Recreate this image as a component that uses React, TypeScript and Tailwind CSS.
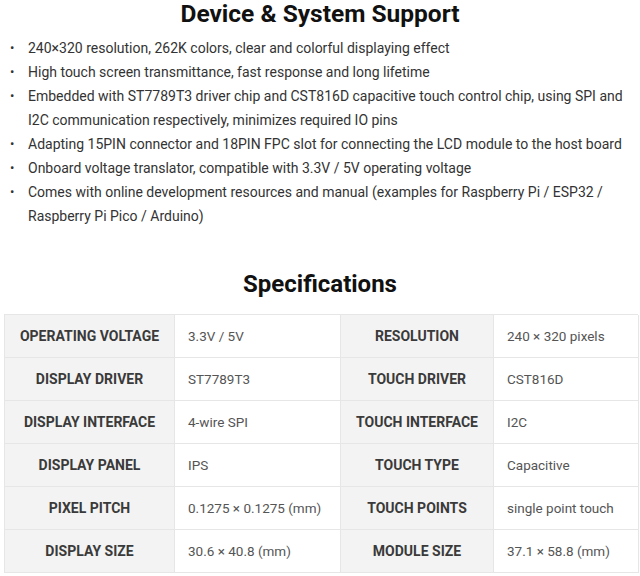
const features = [
  '240×320 resolution, 262K colors, clear and colorful displaying effect',
  'High touch screen transmittance, fast response and long lifetime',
  'Embedded with ST7789T3 driver chip and CST816D capacitive touch control chip, using SPI and I2C communication respectively, minimizes required IO pins',
  'Adapting 15PIN connector and 18PIN FPC slot for connecting the LCD module to the host board',
  'Onboard voltage translator, compatible with 3.3V / 5V operating voltage',
  'Comes with online development resources and manual (examples for Raspberry Pi / ESP32 / Raspberry Pi Pico / Arduino)',
];

const specs: [string, string, string, string][] = [
  ['OPERATING VOLTAGE', '3.3V / 5V', 'RESOLUTION', '240 × 320 pixels'],
  ['DISPLAY DRIVER', 'ST7789T3', 'TOUCH DRIVER', 'CST816D'],
  ['DISPLAY INTERFACE', '4-wire SPI', 'TOUCH INTERFACE', 'I2C'],
  ['DISPLAY PANEL', 'IPS', 'TOUCH TYPE', 'Capacitive'],
  ['PIXEL PITCH', '0.1275 × 0.1275 (mm)', 'TOUCH POINTS', 'single point touch'],
  ['DISPLAY SIZE', '30.6 × 40.8 (mm)', 'MODULE SIZE', '37.1 × 58.8 (mm)'],
];

function Label({ text }: { text: string }) {
  return (
    <div className="flex items-center justify-center bg-[#f3f3f3] border-r border-b border-[#e6e6e6] text-[14px] font-bold text-[#3a3a3a]">
      {text}
    </div>
  );
}

function Value({ text }: { text: string }) {
  return (
    <div className="flex items-center pl-[13px] bg-white border-r border-b border-[#e6e6e6] text-[13.5px] text-[#555]">
      {text}
    </div>
  );
}

export default function App() {
  return (
    <div className="w-[640px] h-[576px] bg-white overflow-hidden font-['Roboto',sans-serif] text-[#222]">
      <h2 className="h-[28px] leading-[28px] text-center text-[24.5px] font-bold text-[#111]">
        Device &amp; System Support
      </h2>

      <ul className="mt-[8px] pl-[10px] pr-[8px] text-[14px] leading-[24px] text-[#333]">
        {features.map((f) => (
          <li key={f} className="flex">
            <span className="w-[18px] shrink-0 text-[13px]">•</span>
            <span>{f}</span>
          </li>
        ))}
      </ul>

      <h2 className="mt-[42px] h-[28px] leading-[28px] text-center text-[24px] font-bold text-[#111]">
        Specifications
      </h2>

      {/* spec table: label / value / label / value */}
      <div className="mt-[16px] ml-[4px] w-[634px] grid grid-cols-[170px_166px_153px_145px] auto-rows-[43px] border-l border-t border-[#e6e6e6]">
        {specs.map((row) => (
          <div key={row[0]} className="contents">
            <Label text={row[0]} />
            <Value text={row[1]} />
            <Label text={row[2]} />
            <Value text={row[3]} />
          </div>
        ))}
      </div>
    </div>
  );
}
